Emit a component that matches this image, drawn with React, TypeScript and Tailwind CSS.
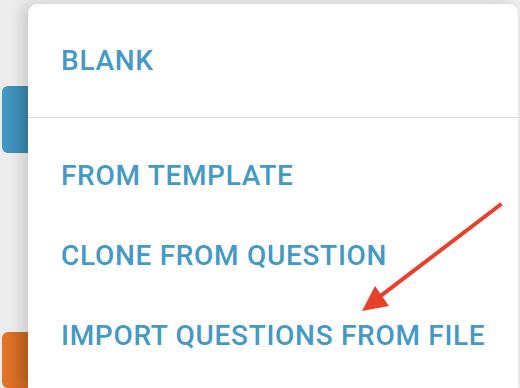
import React from 'react'

const items = ['FROM TEMPLATE', 'CLONE FROM QUESTION', 'IMPORT QUESTIONS FROM FILE']

function MenuItem({ label }: { label: string }) {
  return (
    <div className="flex h-[80px] items-center pl-[33px] text-[28px] font-medium tracking-[0.025em] text-[#4499c5]">
      {label}
    </div>
  )
}

export default function App() {
  return (
    <div
      className="relative flex h-[388px] w-[520px] overflow-hidden bg-[#ececec]"
      style={{ fontFamily: 'Roboto, "Liberation Sans", sans-serif' }}
    >
      {/* side buttons peeking out from behind the menu */}
      <div className="flex w-[28px] shrink-0 flex-col pl-[2px]">
        <div className="mt-[86px] h-[72px] rounded-l-md bg-gradient-to-r from-[#4499c4] to-[#3a86ad]" />
        <div className="mt-[179px] h-[60px] rounded-l-md bg-gradient-to-r from-[#e3762a] to-[#c9651f]" />
      </div>

      {/* menu card */}
      <div className="relative z-10 mt-[4px] mr-[2px] flex-1 rounded-t-[9px] bg-white shadow-[-6px_0_14px_rgba(0,0,0,0.14)]">
        <div className="flex h-[113px] items-center pl-[33px] text-[28px] font-medium tracking-[0.025em] text-[#4499c5]">
          BLANK
        </div>
        <div className="h-px bg-[#e0e0e0]" />
        <div className="pt-[18px]">
          {items.map((label) => (
            <MenuItem key={label} label={label} />
          ))}
        </div>
      </div>

      {/* red annotation arrow */}
      <svg className="absolute left-0 top-0 z-20" width="520" height="388" viewBox="0 0 520 388">
        <line x1="500" y1="205" x2="378" y2="298" stroke="#e8412b" strokeWidth="4" strokeLinecap="square" />
        <polygon points="362,311 375,286 389,306" fill="#e8412b" />
      </svg>
    </div>
  )
}
